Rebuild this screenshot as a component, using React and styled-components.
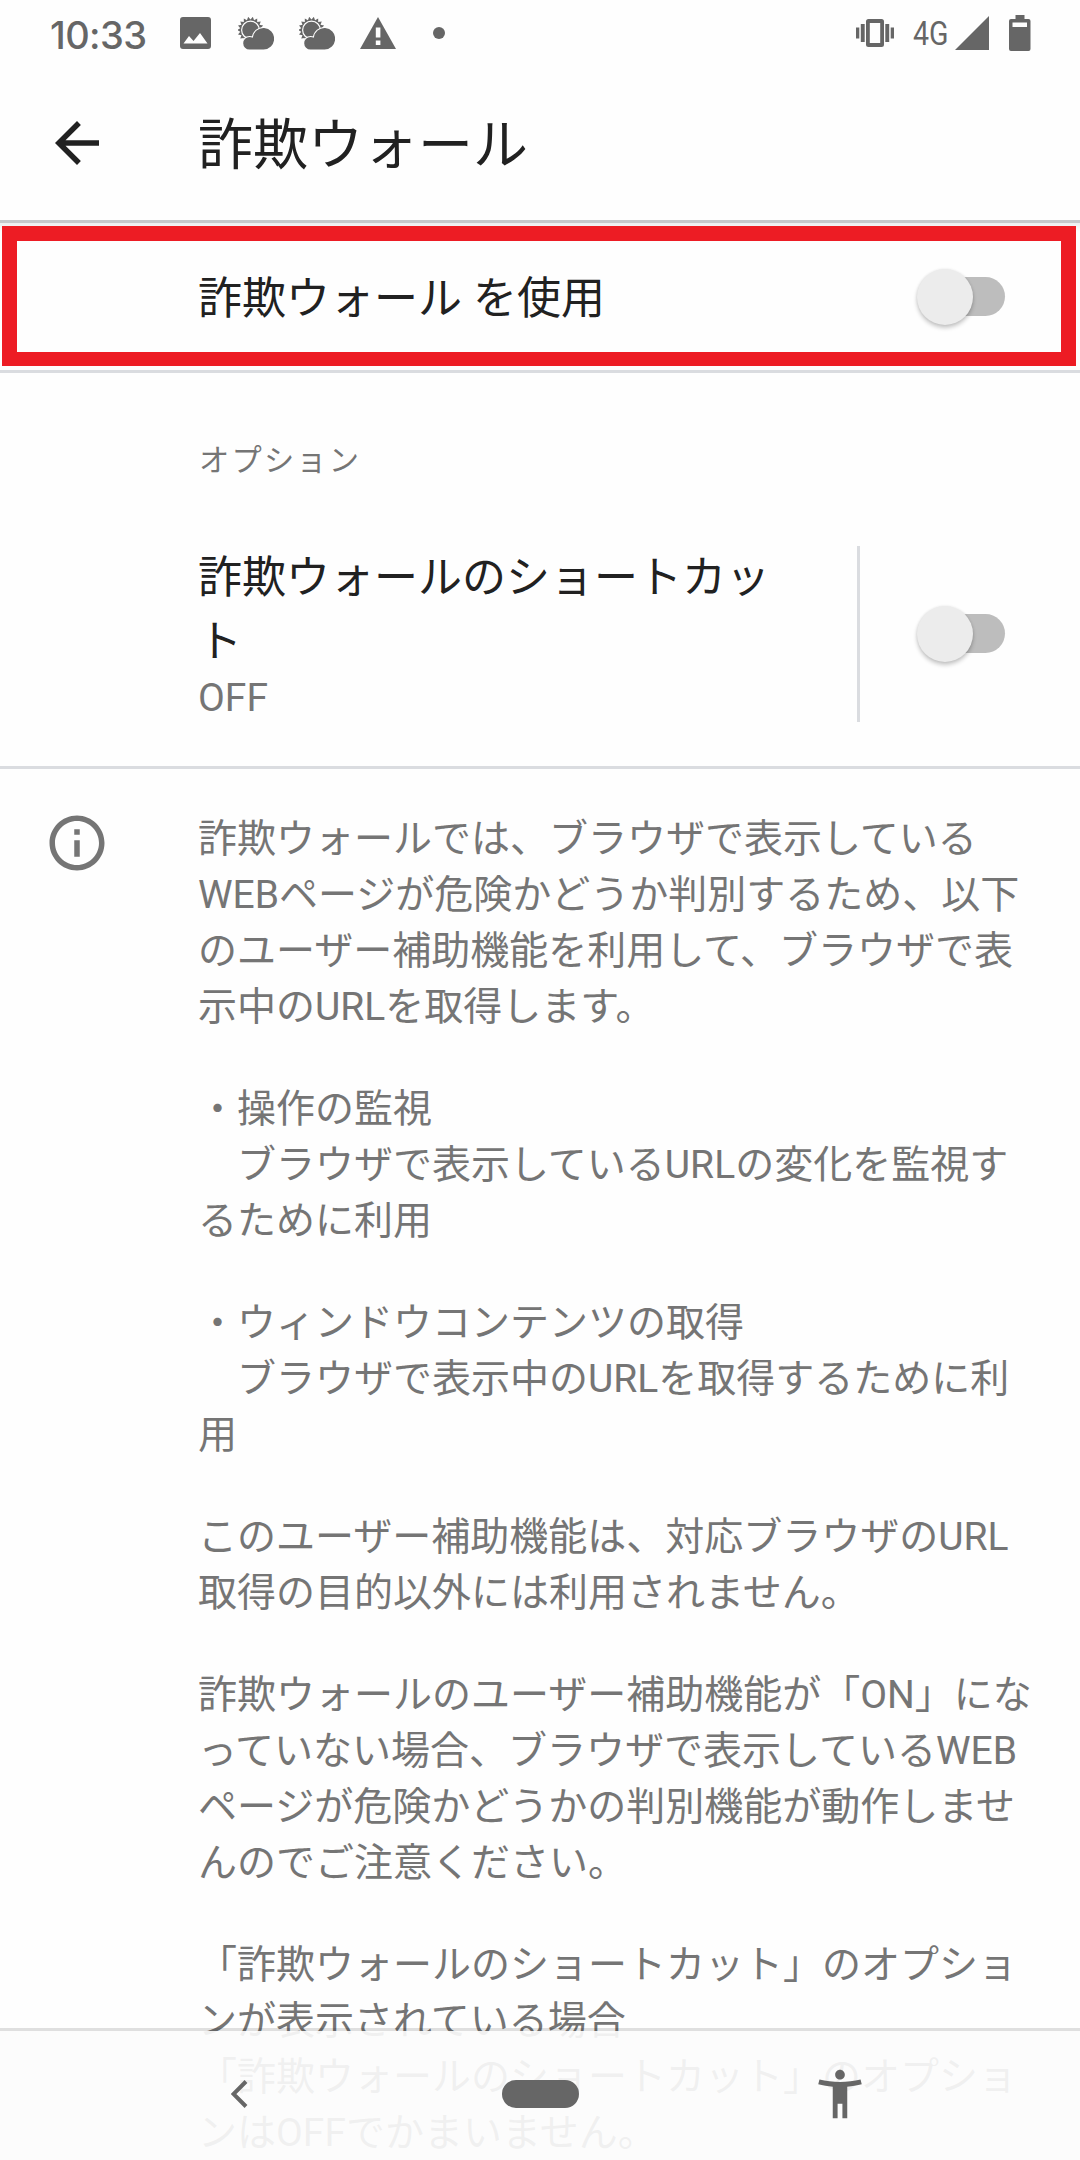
import styled, { createGlobalStyle } from 'styled-components'

const GlobalStyle = createGlobalStyle`
  * {
    box-sizing: border-box;
  }
  body {
    margin: 0;
    background: #fefefe;
  }
`

const Screen = styled.div`
  position: relative;
  display: flex;
  flex-direction: column;
  width: 1080px;
  height: 2160px;
  overflow: hidden;
  background: #fefefe;
  color: #212121;
  font-family: Roboto, 'Noto Sans CJK JP', sans-serif;
`

const StatusBar = styled.div`
  display: flex;
  align-items: center;
  justify-content: space-between;
  flex: none;
  height: 66px;
  padding: 0 49px 0 50px;
  color: #666;

  svg {
    display: block;
    fill: currentColor;
  }
`

const StatusGroup = styled.div`
  display: flex;
  align-items: center;
`

const Clock = styled.span`
  width: 130px;
  font: 450 38px/66px Inter, sans-serif;
  letter-spacing: -0.6px;
  padding-top: 3px;
`

const Notifications = styled.div`
  display: flex;
  gap: 25px;

  svg:first-child {
    margin-right: 2px;
  }
`

const Network = styled.span`
  width: 42px;
  margin-left: 19px;
  font-size: 34px;
  line-height: 66px;
  transform: scaleX(0.84);
  transform-origin: left center;
`

const Battery = styled.div`
  margin-left: 20px;
`

const Toolbar = styled.header`
  display: flex;
  align-items: center;
  flex: none;
  height: 157px;
  padding: 0 44px 1px;
  border-bottom: 3px solid #c6c8cc;
`

const Title = styled.h1`
  margin: 4px 0 0 88px;
  font-size: 55px;
  font-weight: 400;
  line-height: 80px;
`

const MainRow = styled.div`
  flex: none;
  height: 150px;
  padding: 3px 4px 4px 2px;
  border-bottom: 3px solid #dadce0;
  background: linear-gradient(#eceef0, #fefefe 9px);
`

const Highlight = styled.div`
  display: flex;
  align-items: center;
  justify-content: space-between;
  height: 140px;
  padding: 0 56px 0 181px;
  border: solid #ed1c24;
  border-width: 15px 15px 14px;
  background: #fefefe;
`

const RowTitle = styled.div`
  font-size: 44px;
  line-height: 64px;
  white-space: pre;
`

const HighlightTitle = styled(RowTitle)`
  padding-top: 4px;
`

const Switch = styled.div`
  display: flex;
  align-items: center;
  flex: none;
  width: 83px;
  height: 39px;
  margin-left: 5px;
  border-radius: 20px;
  background: #bdbdbd;
`

const Thumb = styled.div`
  width: 56px;
  height: 56px;
  flex: none;
  margin-left: -5px;
  border-radius: 50%;
  background: #ececec;
  box-shadow: 0 3px 4px rgba(0, 0, 0, 0.22), 0 0 3px rgba(0, 0, 0, 0.08);
`

const SectionLabel = styled.div`
  flex: none;
  height: 173px;
  padding: 66px 0 0 199px;
  color: #757575;
  font-size: 30.25px;
  line-height: 44px;
  letter-spacing: 2.2px;
`

const ShortcutRow = styled.div`
  display: flex;
  flex: none;
  height: 223px;
  padding-left: 198px;
  border-bottom: 3px solid #dadce0;
`

const ShortcutText = styled.div`
  width: 659px;
`

const Summary = styled.div`
  padding-top: 1px;
  color: #757575;
  font-size: 39px;
  line-height: 46px;
`

const ShortcutSwitch = styled.div`
  display: flex;
  align-items: center;
  width: 223px;
  height: 176px;
  padding: 0 0 1px 57px;
  border-left: 3px solid #dadce0;
`

const Info = styled.div`
  display: flex;
  flex: none;
  padding: 41px 0 0 44px;
  color: #757575;
`

const Paragraphs = styled.div`
  margin: 1px 0 0 88px;
`

const Paragraph = styled.p`
  margin: 0 0 46px;
  font-size: 39px;
  line-height: 56px;
  white-space: pre;
`

const NavBar = styled.nav`
  position: absolute;
  left: 0;
  right: 0;
  bottom: 0;
  height: 132px;
  display: flex;
  align-items: center;
  padding: 0 210px 3px 231px;
  border-top: 3px solid rgba(0, 0, 0, 0.12);
  background: rgba(252, 252, 252, 0.912);
  background-clip: padding-box;
  color: #666;
`

const HomePill = styled.div`
  width: 77px;
  height: 28px;
  margin: 0 232px 0 254px;
  border-radius: 14px;
  background: #666;
`

const paragraphs = [
  [
    '詐欺ウォールでは、ブラウザで表示している',
    'WEBページが危険かどうか判別するため、以下',
    'のユーザー補助機能を利用して、ブラウザで表',
    '示中のURLを取得します。',
  ],
  ['・操作の監視', '　ブラウザで表示しているURLの変化を監視す', 'るために利用'],
  ['・ウィンドウコンテンツの取得', '　ブラウザで表示中のURLを取得するために利', '用'],
  ['このユーザー補助機能は、対応ブラウザのURL', '取得の目的以外には利用されません。'],
  [
    '詐欺ウォールのユーザー補助機能が「ON」にな',
    'っていない場合、ブラウザで表示しているWEB',
    'ページが危険かどうかの判別機能が動作しませ',
    'んのでご注意ください。',
  ],
  [
    '「詐欺ウォールのショートカット」のオプショ',
    'ンが表示されている場合',
    '「詐欺ウォールのショートカット」のオプショ',
    'ンはOFFでかまいません。',
  ],
]

const ImageIcon = () => (
  <svg width="31" height="32" viewBox="0 0 31 32">
    <path
      fillRule="evenodd"
      d="M3 0h25a3 3 0 0 1 3 3v26a3 3 0 0 1-3 3H3a3 3 0 0 1-3-3V3a3 3 0 0 1 3-3zM3.5 26.5h24L20 16l-6.5 8L9 19z"
    />
  </svg>
)

// 18 sun rays: points alternate between the outer and the inner radius
const sunRays = Array.from({ length: 36 }, (_, i) => {
  const angle = (i * Math.PI) / 18
  const radius = i % 2 ? 10.4 : 13.4
  return `${12.5 + radius * Math.cos(angle)},${13 + radius * Math.sin(angle)}`
}).join(' ')

const WeatherIcon = () => (
  <svg width="36" height="33" viewBox="0 0 36 33">
    <polygon points={sunRays} />
    <circle cx="12.5" cy="13" r="8.9" stroke="#fefefe" strokeWidth="1.2" />
    <path
      d="M11.5 32.5a6.3 6.3 0 0 1 0-12.6c1.2 0 2.3.2 3.3.8a10.7 10.7 0 1 1 10.7 11.8z"
      stroke="#fefefe"
      strokeWidth="2"
      paintOrder="stroke"
    />
  </svg>
)

const WarningIcon = () => (
  <svg width="36" height="32" viewBox="0 0 36 32">
    <path fillRule="evenodd" d="M18 0l18 32H0zM15.8 10.5v10h4.600v-10zM15.8 23.500v4.500h4.600v-4.500z" />
  </svg>
)

const DotIcon = () => (
  <svg width="36" height="32" viewBox="0 0 36 32">
    <circle cx="18" cy="16" r="6" />
  </svg>
)

const VibrateIcon = () => (
  <svg width="38" height="28" viewBox="0 0 38 28">
    <path d="M0 8.500h3.300v11H0zM4.800 5h3.900v18H4.800zM29.300 5h3.900v18h-3.900zM34.700 8.500H38v11h-3.300z" />
    <path fillRule="evenodd" d="M12.500 0h13a2.500 2.500 0 0 1 2.500 2.500v23a2.500 2.500 0 0 1-2.500 2.500h-13a2.500 2.500 0 0 1-2.500-2.500v-23a2.500 2.500 0 0 1 2.500-2.500zM13.800 4v20h10.400V4z" />
  </svg>
)

const SignalIcon = () => (
  <svg width="34" height="34" viewBox="0 0 34 34">
    <path d="M34 0v34H0z" />
  </svg>
)

const BatteryIcon = () => (
  <svg width="22" height="36" viewBox="0 0 22 36">
    <path
      fillRule="evenodd"
      d="M6.5 0h9v4h4a2 2 0 0 1 2 2v28a2 2 0 0 1-2 2H2a2 2 0 0 1-2-2V6a2 2 0 0 1 2-2h4.500zM3.500 7.500v4.500h14.500V7.500z"
    />
  </svg>
)

const BackArrow = () => (
  <svg width="66" height="66" viewBox="0 0 24 24" fill="#212121">
    <path d="M20 11H7.830l5.590-5.590L12 4l-8 8 8 8 1.410-1.410L7.830 13H20v-2z" />
  </svg>
)

const InfoIcon = () => (
  <svg width="66" height="66" viewBox="0 0 24 24" fill="#757575">
    <path d="M11 7h2v2h-2zm0 4h2v6h-2zm1-9C6.480 2 2 6.480 2 12s4.480 10 10 10 10-4.480 10-10S17.520 2 12 2zm0 18c-4.410 0-8-3.590-8-8s3.590-8 8-8 8 3.590 8 8-3.590 8-8 8z" />
  </svg>
)

const NavBack = () => (
  <svg width="17" height="28" viewBox="0 0 17 28" fill="none" stroke="#666" strokeWidth="4">
    <path d="M15 1.500L2.500 14 15 26.500" />
  </svg>
)

const AccessibilityIcon = () => (
  <svg width="58" height="58" viewBox="0 0 24 24" fill="#666">
    <path d="M20.500 6c-2.610.7-5.670 1-8.500 1s-5.890-.3-8.500-1L3 8c1.860.5 4 .830 6 1v13h2v-6h2v6h2V9c2-.170 4.140-.5 6-1l-.5-2zM12 6c1.100 0 2-.9 2-2s-.9-2-2-2-2 .9-2 2 .9 2 2 2z" />
  </svg>
)

const Toggle = () => (
  <Switch role="switch" aria-checked="false">
    <Thumb />
  </Switch>
)

const App = () => {
  return (
    <>
      <GlobalStyle />
      <Screen>
        <StatusBar>
          <StatusGroup>
            <Clock>10:33</Clock>
            <Notifications>
              <ImageIcon />
              <WeatherIcon />
              <WeatherIcon />
              <WarningIcon />
              <DotIcon />
            </Notifications>
          </StatusGroup>
          <StatusGroup>
            <VibrateIcon />
            <Network>4G</Network>
            <SignalIcon />
            <Battery>
              <BatteryIcon />
            </Battery>
          </StatusGroup>
        </StatusBar>
        <Toolbar>
          <BackArrow />
          <Title>詐欺ウォール</Title>
        </Toolbar>
        <MainRow>
          <Highlight>
            <HighlightTitle>詐欺ウォール を使用</HighlightTitle>
            <Toggle />
          </Highlight>
        </MainRow>
        <SectionLabel>オプション</SectionLabel>
        <ShortcutRow>
          <ShortcutText>
            <RowTitle>{'詐欺ウォールのショートカッ\nト'}</RowTitle>
            <Summary>OFF</Summary>
          </ShortcutText>
          <ShortcutSwitch>
            <Toggle />
          </ShortcutSwitch>
        </ShortcutRow>
        <Info>
          <InfoIcon />
          <Paragraphs>
            {paragraphs.map((lines) => (
              <Paragraph key={lines.join()}>{lines.join('\n')}</Paragraph>
            ))}
          </Paragraphs>
        </Info>
        <NavBar>
          <NavBack />
          <HomePill />
          <AccessibilityIcon />
        </NavBar>
      </Screen>
    </>
  )
}

export default App
